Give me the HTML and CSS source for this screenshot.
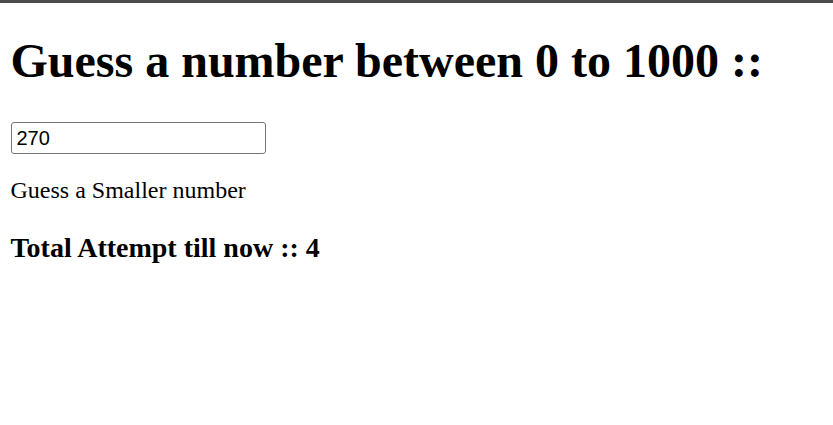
FILE: index.html
```html
<!DOCTYPE html>
<html>
<head>
<meta charset="utf-8">
<link rel="stylesheet" href="styles.css">
</head>
<body>
<div class="topbar"></div>
<main class="page">
  <h1 class="title">Guess a number between 0 to 1000 ::</h1>
  <input class="guess" type="text" value="270">
  <p class="hint">Guess a Smaller number</p>
  <h3 class="attempts">Total Attempt till now :: 4</h3>
</main>
</body>
</html>
```
FILE: styles.css
```css
html, body {
  margin: 0;
  padding: 0;
  background: #fff;
}
.topbar {
  height: 3px;
  background: #4b4b4b;
}
.page {
  padding: 0 10.5px;
  font-family: "Liberation Serif", "Times New Roman", serif;
  color: #000;
}
.title {
  font-size: 48px;
  font-weight: bold;
  margin: 30px 0 34px;
}
.guess {
  display: block;
  box-sizing: border-box;
  width: 255px;
  height: 32px;
  padding: 0 5px;
  border: 1px solid #767676;
  border-radius: 3px;
  font-family: "Liberation Sans", Arial, sans-serif;
  font-size: 20px;
  color: #000;
  margin: 0;
}
.hint {
  font-size: 24px;
  margin: 23px 0 24px;
}
.attempts {
  font-size: 28px;
  font-weight: bold;
  margin: 28px 0;
}
```
